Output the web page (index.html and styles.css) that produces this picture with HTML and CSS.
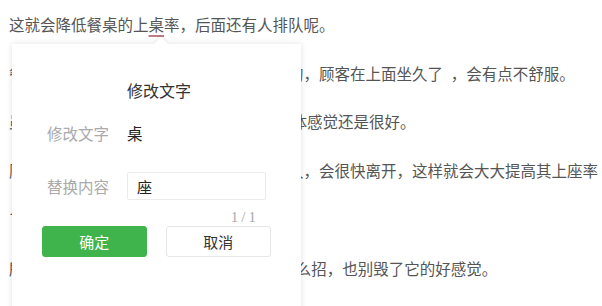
FILE: index.html
```html
<!DOCTYPE html>
<html lang="zh-CN">
<head>
<meta charset="utf-8">
<title>修改文字</title>
<link rel="stylesheet" href="styles.css">
</head>
<body>
<div class="article">
  <p>这就会降低餐桌的上<span class="mark">桌</span>率，后面还有人排队呢。</p>
  <p>餐厅的椅子和桌子一般都是设计得比较硬的，顾客在上面坐久了&ensp;，会有点不舒服。</p>
  <p>虽然坐着不太舒服，但是 顾客对餐厅的整体感觉还是很好。</p>
  <p>顾客吃完饭之后，就不会在座位上停留很久，会很快离开，这样就会大大提高其上座率了。</p>
  <p>所以说，不管餐厅为了提高上座率&ensp;用了什么招，也别毁了它的好感觉。</p>
</div>

<div class="popup">
  <div class="popup-arrow"></div>
  <div class="popup-title">修改文字</div>
  <div class="row row-text">
    <span class="label">修改文字</span>
    <span class="value">桌</span>
  </div>
  <div class="row row-input">
    <span class="label">替换内容</span>
    <input class="input" type="text" value="座">
  </div>
  <div class="counter">1/1</div>
  <div class="actions">
    <button class="btn btn-ok" type="button">确定</button>
    <button class="btn btn-cancel" type="button">取消</button>
  </div>
</div>
</body>
</html>
```

FILE: styles.css
```css
html, body {
  margin: 0;
  padding: 0;
  background: #ffffff;
  overflow: hidden;
}

body {
  width: 602px;
  height: 306px;
  font-family: "Noto Sans CJK SC", "Noto Sans", sans-serif;
  color: #555;
}

.article {
  padding-left: 9px;
  font-size: 15.5px;
}

.article p {
  margin: 0;
  line-height: 48.7px;
}

.mark {
  text-decoration: underline;
  text-decoration-color: #c27b88;
  text-decoration-thickness: 2px;
  text-underline-offset: 4px;
}

.popup {
  position: absolute;
  left: 12px;
  top: 44px;
  width: 289px;
  height: 290px;
  box-sizing: border-box;
  padding: 36px 30px 0 30px;
  background: #fff;
  box-shadow: 0 0 6px rgba(0, 0, 0, 0.12);
  font-family: "Noto Sans CJK SC", "Noto Sans", sans-serif;
}

.popup-arrow {
  position: absolute;
  top: -5px;
  left: 144px;
  width: 10px;
  height: 10px;
  background: #fff;
  transform: rotate(45deg);
  box-shadow: -2px -2px 3px rgba(0, 0, 0, 0.05);
}

.popup-title {
  position: relative;
  font-size: 16px;
  line-height: 20px;
  color: #333;
  text-align: center;
  padding-left: 5px;
}

.row {
  display: flex;
  align-items: center;
  padding-left: 5px;
}

.row-text {
  margin-top: 23px;
  height: 20px;
}

.row-input {
  margin-top: 29px;
  height: 28px;
}

.label {
  width: 80px;
  font-size: 15.5px;
  color: #aaa;
  flex: none;
}

.value {
  font-size: 15.5px;
  color: #222;
}

.input {
  width: 139px;
  height: 28px;
  box-sizing: border-box;
  border: 1px solid #ebebeb;
  border-radius: 2px;
  padding: 0 9px;
  font-family: "Noto Sans CJK SC", sans-serif;
  font-size: 15px;
  color: #222;
  outline: none;
}

.counter {
  margin-top: 9px;
  margin-right: 12px;
  height: 16px;
  line-height: 16px;
  text-align: right;
  font-size: 15px;
  color: #aaa;
  font-family: "Liberation Serif", "Noto Sans CJK SC", serif;
  letter-spacing: 3px;
}

.actions {
  display: flex;
  gap: 19px;
  margin-top: 1px;
}

.btn {
  height: 31px;
  box-sizing: border-box;
  border-radius: 3px;
  font-family: "Noto Sans CJK SC", sans-serif;
  font-size: 15px;
  padding: 0;
  cursor: pointer;
}

.btn-ok {
  width: 105px;
  background: #40b44c;
  border: 1px solid #40b44c;
  color: #fff;
}

.btn-cancel {
  width: 106px;
  background: #fff;
  border: 1px solid #e6e6e6;
  color: #333;
}
```
